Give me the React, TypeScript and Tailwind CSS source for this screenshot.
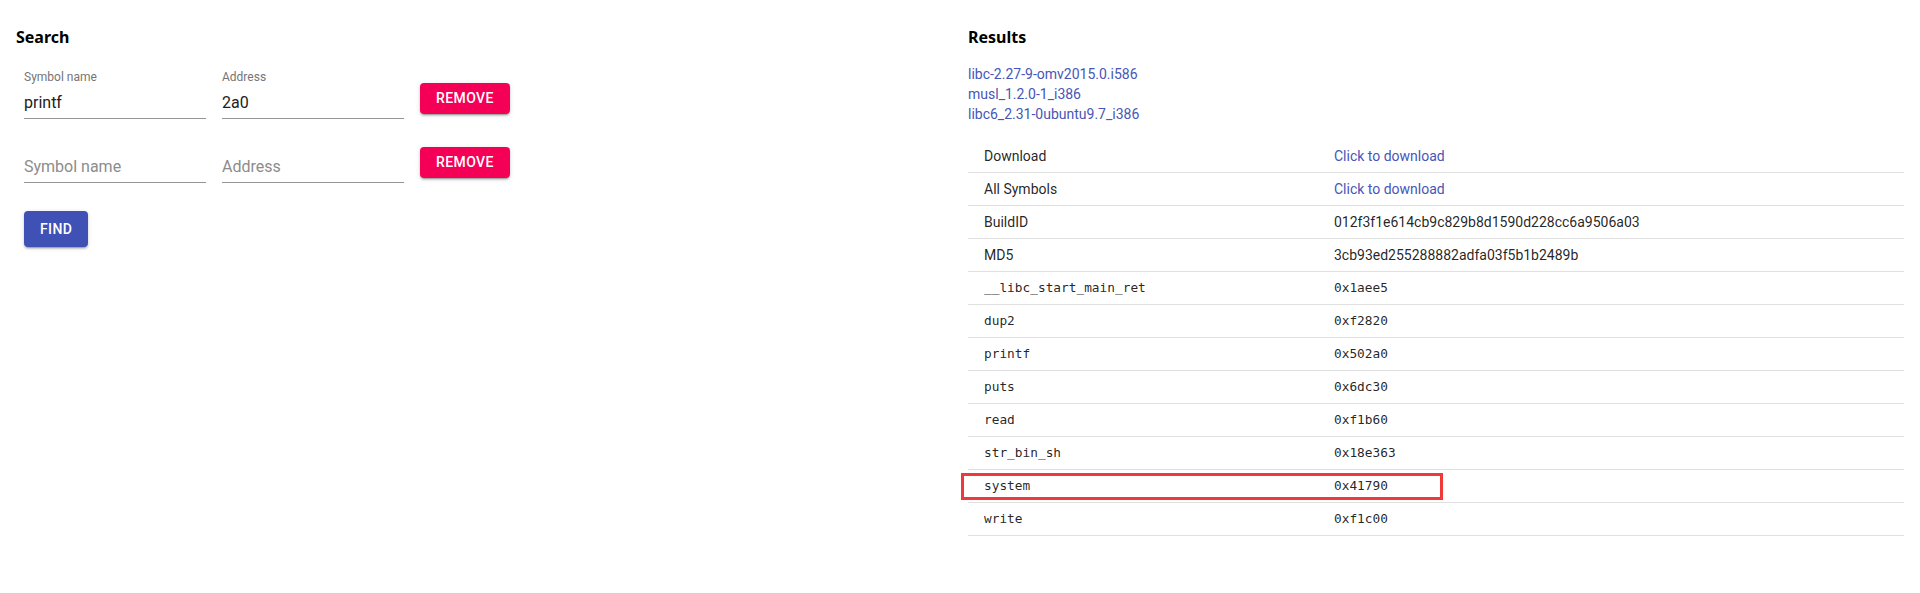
import { useState } from 'react';

const libs = ['libc-2.27-9-omv2015.0.i586', 'musl_1.2.0-1_i386', 'libc6_2.31-0ubuntu9.7_i386'];

const symbols: [string, string][] = [
  ['__libc_start_main_ret', '0x1aee5'],
  ['dup2', '0xf2820'],
  ['printf', '0x502a0'],
  ['puts', '0x6dc30'],
  ['read', '0xf1b60'],
  ['str_bin_sh', '0x18e363'],
  ['system', '0x41790'],
  ['write', '0xf1c00'],
];

const btnShadow =
  'shadow-[0px_3px_1px_-2px_rgba(0,0,0,0.2),0px_2px_2px_0px_rgba(0,0,0,0.14),0px_1px_5px_0px_rgba(0,0,0,0.12)]';

function Field({ label, value }: { label: string; value: string }) {
  const [v, setV] = useState(value);
  return (
    <div className="w-[182px] flex flex-col">
      <div className="h-4 text-[12px] leading-4 text-[#757575]">{v ? label : ''}</div>
      <input
        value={v}
        onChange={(e) => setV(e.target.value)}
        placeholder={label}
        className="w-full pt-2 pb-[6px] text-[16px] leading-[19px] text-[#212121] placeholder:text-[#8c8c8c] border-b border-[#949494] outline-none bg-transparent"
      />
    </div>
  );
}

export default function App() {
  const [rows] = useState([
    { name: 'printf', addr: '2a0' },
    { name: '', addr: '' },
  ]);

  return (
    <div className="grid grid-cols-2 gap-4 px-4 pt-[25px] bg-white min-h-[593px] font-['Roboto',sans-serif]">
      {/* Search */}
      <div>
        <h2 className="font-['Noto_Sans',sans-serif] font-bold text-[16px] leading-6 text-black">Search</h2>
        <div className="pl-2 mt-5 flex flex-col gap-[14px]">
          {rows.map((r, i) => (
            <div key={i} className="flex items-end gap-4">
              <Field label="Symbol name" value={r.name} />
              <Field label="Address" value={r.addr} />
              <button
                className={`mb-[5px] h-[31px] px-4 rounded bg-[#f50057] text-white text-[14px] font-medium tracking-[0.4px] uppercase ${btnShadow}`}
              >
                Remove
              </button>
            </div>
          ))}
        </div>
        <div className="pl-2 mt-7">
          <button
            className={`h-9 px-4 rounded bg-[#3f51b5] text-white text-[14px] font-medium tracking-[0.4px] uppercase ${btnShadow}`}
          >
            Find
          </button>
        </div>
      </div>

      {/* Results */}
      <div>
        <h2 className="font-['Noto_Sans',sans-serif] font-bold text-[16px] leading-6 text-black">Results</h2>
        <div className="mt-[15px] flex flex-col">
          {libs.map((l) => (
            <a key={l} href="#" className="text-[14px] leading-5 text-[#4656b8] w-fit">
              {l}
            </a>
          ))}
        </div>
        <div className="mt-4 text-[14px] text-[rgba(0,0,0,0.87)]">
          <div className="h-[33px] grid grid-cols-[350px_1fr] items-center border-b border-[#e0e0e0]">
            <div className="pl-4 leading-5">Download</div>
            <div className="pl-4 leading-5">
              <a href="#" className="text-[#4656b8]">Click to download</a>
            </div>
          </div>
          <div className="h-[33px] grid grid-cols-[350px_1fr] items-center border-b border-[#e0e0e0]">
            <div className="pl-4 leading-5">All Symbols</div>
            <div className="pl-4 leading-5">
              <a href="#" className="text-[#4656b8]">Click to download</a>
            </div>
          </div>
          <div className="h-[33px] grid grid-cols-[350px_1fr] items-center border-b border-[#e0e0e0]">
            <div className="pl-4 leading-5">BuildID</div>
            <div className="pl-4 leading-5">012f3f1e614cb9c829b8d1590d228cc6a9506a03</div>
          </div>
          <div className="h-[33px] grid grid-cols-[350px_1fr] items-center border-b border-[#e0e0e0]">
            <div className="pl-4 leading-5">MD5</div>
            <div className="pl-4 leading-5">3cb93ed255288882adfa03f5b1b2489b</div>
          </div>
          {symbols.map(([name, addr]) => (
            <div
              key={name}
              className="relative h-[33px] grid grid-cols-[350px_1fr] items-center border-b border-[#e0e0e0] font-['DejaVu_Sans_Mono',monospace] text-[12.8px]"
            >
              <div className="pl-4 leading-5">{name}</div>
              <div className="pl-4 leading-5">{addr}</div>
              {name === 'system' && (
                <div className="absolute left-[-7px] top-[3px] w-[482px] h-[27px] border-[3px] border-[#f03a3a] pointer-events-none" />
              )}
            </div>
          ))}
        </div>
      </div>
    </div>
  );
}
